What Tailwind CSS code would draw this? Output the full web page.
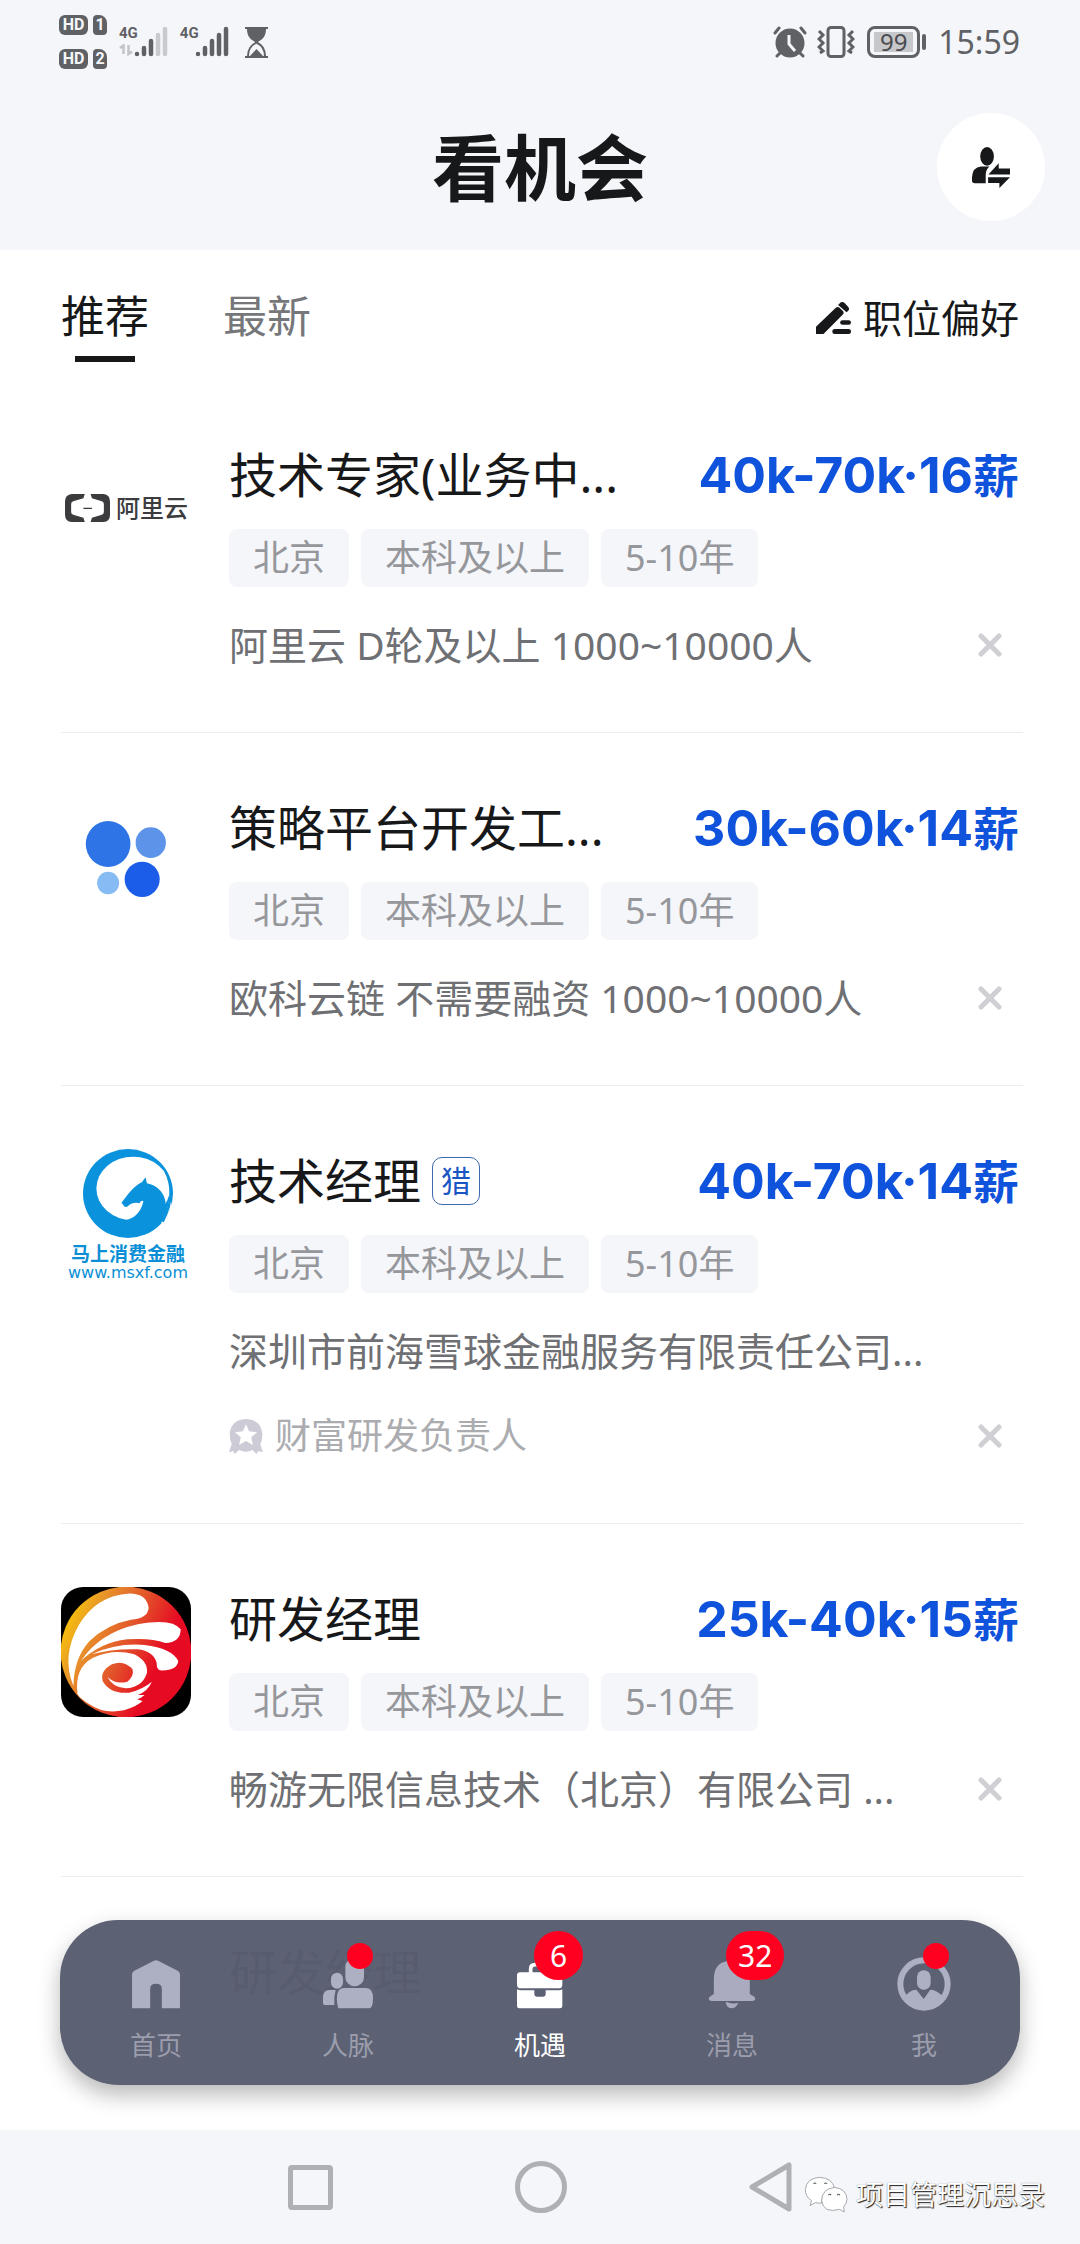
<!DOCTYPE html>
<html lang="zh-CN">
<head>
    <meta charset="UTF-8">
    <meta name="viewport" content="width=device-width, initial-scale=1.0">
    <title>看机会</title>
    <script src="https://cdn.jsdelivr.net/npm/@tailwindcss/browser@4"></script>
</head>
<body class="flex h-screen flex-col overflow-hidden bg-white font-['Noto_Sans','Noto_Sans_CJK_SC',sans-serif] text-[#17181a]">

    <header class="bg-[#f5f6fa]">
        <!-- status bar -->
        <div class="flex h-[84px] items-center justify-between pl-[59px] pr-[60px] text-[#5f6165]">
            <div class="flex items-center">
                <div class="flex flex-col gap-[14px] font-[Roboto,sans-serif] text-base font-bold leading-5 text-[#f5f6fa]">
                    <div class="flex gap-[5px]">
                        <span class="w-[29px] rounded-md bg-[#5f6165] text-center">HD</span>
                        <span class="w-[14px] rounded-sm rounded-tr-lg bg-[#5f6165] text-center">1</span>
                    </div>
                    <div class="flex gap-[5px]">
                        <span class="w-[29px] rounded-md bg-[#5f6165] text-center">HD</span>
                        <span class="w-[14px] rounded-sm rounded-tr-lg bg-[#5f6165] text-center">2</span>
                    </div>
                </div>
                <div class="ml-3 flex h-8 items-start font-[Roboto,sans-serif] text-[15px] font-bold leading-[14px]">
                    <div class="flex flex-col items-start">
                        <span>4G</span>
                        <svg class="mt-1 h-3 w-[14px]" viewBox="0 0 14 12" fill="none" stroke="#c3c4c8" stroke-width="2.5"><path d="M1 4 4.500 1.500V10M9.500 1V10L13 7.500"/></svg>
                    </div>
                    <svg class="-ml-1 h-8 w-[34px]" viewBox="0 0 34 32" stroke-width="4.500" stroke-linecap="round"><g stroke="#5f6165"><path d="M3 28v0M10 22v6M17 15v13"/></g><g stroke="#c9cacd"><path d="M24 9v19M31 3v25"/></g></svg>
                </div>
                <div class="ml-3 flex h-8 items-start font-[Roboto,sans-serif] text-[15px] font-bold leading-[14px]">
                    <span>4G</span>
                    <svg class="-ml-1 h-8 w-[34px]" viewBox="0 0 34 32" stroke="#5f6165" stroke-width="4.500" stroke-linecap="round"><path d="M3 28v0M10 22v6M17 15v13M24 9v19M31 3v25"/></svg>
                </div>
                <svg class="ml-4 h-[31px] w-[23px]" viewBox="0 0 23 31" fill="#5f6165"><path d="M0 0h23v2h-2c0 7-3 10-8 13h-3C5 12 2 9 2 2H0ZM0 29h23v2H0Z"/><path d="M3 29c0-7 3-11 8.500-13.500C17 18 20 22 20 29" fill="none" stroke="#5f6165" stroke-width="2"/><path d="M5 29l6.500-7 6.500 7Z"/></svg>
            </div>
            <div class="flex items-center">
                <svg class="h-8 w-[34px]" viewBox="0 0 34 32" fill="#5f6165"><circle cx="17" cy="17" r="14.500"/><path d="M16 9v9l6 7" fill="none" stroke="#f5f6fa" stroke-width="3"/><path d="M2 7l4-5M32 7l-4-5M4 30l5-5M30 30l-5-5" fill="none" stroke="#5f6165" stroke-width="3" stroke-linecap="round"/></svg>
                <svg class="ml-2.5 h-8 w-[38px]" viewBox="0 0 38 32" fill="none" stroke="#5f6165" stroke-width="3"><rect x="11" y="1.500" width="16" height="29" rx="3"/><path d="M2 5l4 4-4 4 4 4-4 4 4 4-3 2M36 5l-4 4 4 4-4 4 4 4-4 4 3 2"/></svg>
                <div class="ml-3 flex h-8 w-[53px] items-center justify-center rounded-lg border-[3px] border-[#5f6165] p-1">
                    <span class="w-full bg-[#c6c7ca] text-center text-2xl leading-5 text-[#4a4b4f]">99</span>
                </div>
                <span class="ml-0.5 h-4 w-1 rounded-sm bg-[#5f6165]"></span>
                <span class="ml-3 text-[32px] leading-10">15:59</span>
            </div>
        </div>
        <!-- page title -->
        <div class="grid h-[166px] grid-cols-3 items-center px-[35px]">
            <h1 class="col-start-2 text-center text-[72px] font-bold leading-[90px]">看机会</h1>
            <button aria-label="切换身份" class="flex size-[108px] items-center justify-center justify-self-end rounded-full bg-white">
                <svg class="h-[41px] w-[38px]" viewBox="1254 440 111 122" preserveAspectRatio="none" fill="#17181a"><ellipse cx="1298" cy="468" rx="20" ry="28"/><path d="M1254 540v-10q2-30 26-32h25q-11 10-11 24v26h-32q-8 0-8-8ZM1302 522l30-34v16h33v18ZM1301 530h64l-31 32v-15h-33Z"/></svg>
            </button>
        </div>
    </header>

    <main class="relative min-h-0 flex-1 overflow-hidden pl-[61px] pr-[57px]">
        <div class="flex h-[130px] items-start justify-between pr-1 pt-[34px]">
            <div class="flex gap-[74px] text-[44px] leading-[64px]">
                <button class="flex flex-col items-center">推荐<span class="mt-2 h-1.5 w-[60px] bg-[#17181a]"></span></button>
                <button class="self-start text-[#76777a]">最新</button>
            </div>
            <button class="flex items-center gap-3 pt-1 text-[39px] leading-[60px]">
                <svg class="h-8 w-[35px]" viewBox="803 125 103 97" preserveAspectRatio="none" fill="#17181a"><path d="M803 222v-22l59-58q6-4 11 1l10 10q3 5-1 10l-57 59ZM868 134l8-8q6-3 12 3l10 11q5 7-1 12l-4 4Z"/><rect x="874" y="180" width="32" height="14" rx="7"/><rect x="851" y="207" width="55" height="15" rx="7"/></svg>
                职位偏好
            </button>
        </div>

        <article class="flex h-[353px] gap-[38px] border-b border-[#ededf0] pt-[63px]">
            <div class="flex size-[130px] shrink-0 items-center gap-1.5 pl-1 text-[#3c3c3e]">
                <svg class="h-7 w-[45px] shrink-0" viewBox="189 700 132 84" preserveAspectRatio="none" fill="#3c3c3e"><path d="M247 700h-38q-20 2-20 22v40q0 20 20 22h38l-4-13-30-9q-6-2-6-8v-24q0-6 6-8l30-9ZM264 700h38q19 2 19 22v40q0 20-19 22h-38l4-13 29-9q6-2 6-8v-24q0-6-6-8l-29-9ZM243 741h25v4h-25Z"/></svg>
                <span class="whitespace-nowrap text-2xl font-medium leading-8">阿里云</span>
            </div>
            <div class="min-w-0 flex-1">
                <div class="flex h-16 items-center justify-between pr-1 text-5xl leading-[64px]">
                    <h2 class="whitespace-nowrap">技术专家(业务中...</h2>
                    <p class="whitespace-nowrap font-[Inter,'Noto_Sans_CJK_SC',sans-serif] text-[50px] font-bold text-[#0f52dc]">40k-70k·16<span class="text-[46px]">薪</span></p>
                </div>
                <ul class="mt-[22px] flex gap-3 text-[36px] leading-[58px] text-[#96979b]">
                    <li class="rounded-lg bg-[#f5f6fa] px-6">北京</li>
                    <li class="rounded-lg bg-[#f5f6fa] px-6">本科及以上</li>
                    <li class="rounded-lg bg-[#f5f6fa] px-6">5-10年</li>
                </ul>
                <div class="mt-[30px] flex items-center justify-between pr-[21px] text-[39px] leading-[56px] text-[#6f7073]">
                    <p class="whitespace-nowrap">阿里云 D轮及以上 1000~10000人</p>
                    <button aria-label="不感兴趣"><svg class="size-6" viewBox="0 0 24 24" stroke="#cfcfd4" stroke-width="5" stroke-linecap="round"><path d="M3 3l18 18M21 3 3 21"/></svg></button>
                </div>
            </div>
        </article>

        <article class="flex h-[353px] gap-[38px] border-b border-[#ededf0] pt-[63px]">
            <svg class="size-[130px] shrink-0" viewBox="177 108 378 390" preserveAspectRatio="none"><ellipse cx="314" cy="252" rx="65" ry="69" fill="#2f74e6"/><ellipse cx="438" cy="248" rx="44" ry="46" fill="#5e93ea"/><ellipse cx="314" cy="369" rx="32" ry="34" fill="#87bbf3"/><ellipse cx="413" cy="358" rx="51" ry="53" fill="#1b5de9"/></svg>
            <div class="min-w-0 flex-1">
                <div class="flex h-16 items-center justify-between pr-1 text-5xl leading-[64px]">
                    <h2 class="whitespace-nowrap">策略平台开发工...</h2>
                    <p class="whitespace-nowrap font-[Inter,'Noto_Sans_CJK_SC',sans-serif] text-[50px] font-bold text-[#0f52dc]">30k-60k·14<span class="text-[46px]">薪</span></p>
                </div>
                <ul class="mt-[22px] flex gap-3 text-[36px] leading-[58px] text-[#96979b]">
                    <li class="rounded-lg bg-[#f5f6fa] px-6">北京</li>
                    <li class="rounded-lg bg-[#f5f6fa] px-6">本科及以上</li>
                    <li class="rounded-lg bg-[#f5f6fa] px-6">5-10年</li>
                </ul>
                <div class="mt-[30px] flex items-center justify-between pr-[21px] text-[39px] leading-[56px] text-[#6f7073]">
                    <p class="whitespace-nowrap">欧科云链 不需要融资 1000~10000人</p>
                    <button aria-label="不感兴趣"><svg class="size-6" viewBox="0 0 24 24" stroke="#cfcfd4" stroke-width="5" stroke-linecap="round"><path d="M3 3l18 18M21 3 3 21"/></svg></button>
                </div>
            </div>
        </article>

        <article class="flex h-[438px] gap-[38px] border-b border-[#ededf0] pt-[63px]">
            <div class="flex h-[130px] w-[130px] shrink-0 flex-col items-center pl-1 text-[#0a8fd6]">
                <svg class="h-[89px] w-[90px] shrink-0" viewBox="240 83 262 268" preserveAspectRatio="none"><ellipse cx="371" cy="217" rx="131" ry="134" fill="#0a92dc"/><ellipse cx="386" cy="202" rx="107" ry="96" fill="#fff"/><path d="M488 180q14 60-20 124l8 8 22-60Z" fill="#fff"/><path d="M480 150q34 70-8 152" fill="none" stroke="#0a92dc" stroke-width="7"/><path d="M352 245l20-27q20-26 40-36l10-14 4 18q44 10 54 54 4 36-14 64-28 38-97 38l-71-38 30-8q72 12 88-56-6-4-12 6-22-4-34 10l-8 2Z" fill="#0a92dc"/></svg>
                <span class="mt-1 whitespace-nowrap text-[19px] font-bold leading-6">马上消费金融</span>
                <span class="whitespace-nowrap font-['DejaVu_Sans',sans-serif] text-base leading-[14px]">www.msxf.com</span>
            </div>
            <div class="min-w-0 flex-1">
                <div class="flex h-16 items-center justify-between pr-1 text-5xl leading-[64px]">
                    <h2 class="flex items-center gap-[11px] whitespace-nowrap">技术经理<span class="flex size-12 items-center justify-center rounded-[10px] border border-[#3c68ad] text-[30px] text-[#1a55c4]">猎</span></h2>
                    <p class="whitespace-nowrap font-[Inter,'Noto_Sans_CJK_SC',sans-serif] text-[50px] font-bold text-[#0f52dc]">40k-70k·14<span class="text-[46px]">薪</span></p>
                </div>
                <ul class="mt-[22px] flex gap-3 text-[36px] leading-[58px] text-[#96979b]">
                    <li class="rounded-lg bg-[#f5f6fa] px-6">北京</li>
                    <li class="rounded-lg bg-[#f5f6fa] px-6">本科及以上</li>
                    <li class="rounded-lg bg-[#f5f6fa] px-6">5-10年</li>
                </ul>
                <p class="mt-[30px] whitespace-nowrap text-[39px] leading-[56px] text-[#6f7073]">深圳市前海雪球金融服务有限责任公司...</p>
                <div class="mt-[29px] flex items-center justify-between pr-[21px] text-[36px] leading-[56px] text-[#abacaf]">
                    <p class="flex items-center gap-3 whitespace-nowrap">
                        <svg class="h-[35px] w-[34px]" viewBox="665 888 98 105" preserveAspectRatio="none" fill="#cccbd6"><path d="M714 888q44 2 47 46 0 20-6 30l8 24-13-4-6 9-11-12q-20 10-39 0l-12 12-5-9-12 4 8-26q-6-10-6-28 3-44 47-46Z"/><path d="M714 904l9 21 23 3-17 15 5 23-20-12-20 12 5-23-17-15 23-3Z" fill="#fff"/></svg>
                        财富研发负责人
                    </p>
                    <button aria-label="不感兴趣"><svg class="size-6" viewBox="0 0 24 24" stroke="#cfcfd4" stroke-width="5" stroke-linecap="round"><path d="M3 3l18 18M21 3 3 21"/></svg></button>
                </div>
            </div>
        </article>

        <article class="flex h-[353px] gap-[38px] border-b border-[#ededf0] pt-[63px]">
            <svg class="size-[130px] shrink-0 rounded-[22px] bg-black" viewBox="177 78 378 390" preserveAspectRatio="none">
                <defs><linearGradient id="sun" x1="0" y1="0.2" x2="0.9" y2="0.6"><stop offset="0" stop-color="#fbd000"/><stop offset="0.25" stop-color="#e8962a"/><stop offset="0.55" stop-color="#e2552a"/><stop offset="0.85" stop-color="#e60a22"/></linearGradient></defs>
                <ellipse cx="366" cy="273" rx="190" ry="196" fill="url(#sun)"/>
                <g fill="#fff">
                    <path d="M213 375q-36-90 17-185 50-85 140-92 55-3 62 42-2 32-52 36-70 14-120 64-45 50-47 135Z"/>
                    <path d="M235 300q55-85 165-110 100-20 125 15 0 40-45 41-40-16-110-11-80 10-135 65Z"/>
                    <path d="M265 280q75-35 155-28 80 10 98 48-3 30-53 28-10-3-10-23-10-35-55-40-70-3-135 15Z"/>
                    <path d="M225 400q-10-80 45-110 60-28 120-10 40 20 37 55-12 43-62 47-40-4-53-35 23 25 58 15 20-17 15-37-25-30-60-15-35 20-27 50 22 40 77 35 40-10 66-33-11 28-41 40h20q-10 10-22 13l16 5q-14 15-54 28-60 12-100-18-25-15-35-30Z"/>
                </g>
            </svg>
            <div class="min-w-0 flex-1">
                <div class="flex h-16 items-center justify-between pr-1 text-5xl leading-[64px]">
                    <h2 class="whitespace-nowrap">研发经理</h2>
                    <p class="whitespace-nowrap font-[Inter,'Noto_Sans_CJK_SC',sans-serif] text-[50px] font-bold text-[#0f52dc]">25k-40k·15<span class="text-[46px]">薪</span></p>
                </div>
                <ul class="mt-[22px] flex gap-3 text-[36px] leading-[58px] text-[#96979b]">
                    <li class="rounded-lg bg-[#f5f6fa] px-6">北京</li>
                    <li class="rounded-lg bg-[#f5f6fa] px-6">本科及以上</li>
                    <li class="rounded-lg bg-[#f5f6fa] px-6">5-10年</li>
                </ul>
                <div class="mt-[30px] flex items-center justify-between pr-[21px] text-[39px] leading-[56px] text-[#6f7073]">
                    <p class="whitespace-nowrap">畅游无限信息技术（北京）有限公司 ...</p>
                    <button aria-label="不感兴趣"><svg class="size-6" viewBox="0 0 24 24" stroke="#cfcfd4" stroke-width="5" stroke-linecap="round"><path d="M3 3l18 18M21 3 3 21"/></svg></button>
                </div>
            </div>
        </article>

        <!-- next row, mostly under the tab bar -->
        <article class="flex gap-[38px] pt-[63px]">
            <div class="size-[130px] shrink-0"></div>
            <div class="flex h-16 min-w-0 flex-1 items-center justify-between pr-1 text-5xl leading-[64px]">
                <h2 class="whitespace-nowrap">研发经理</h2>
            </div>
        </article>

        <nav class="absolute inset-x-[60px] bottom-[45px] grid h-[165px] grid-cols-5 rounded-[58px] bg-[#595e70]/98 text-[26px] leading-9 text-[#9b9dad] shadow-[0_10px_22px_rgba(0,0,0,0.28)]">
            <a href="#" class="flex flex-col items-center pt-[39px]">
                <svg class="size-[50px]" viewBox="380 238 146 149" preserveAspectRatio="none" fill="#adb0c2"><path d="M383 385V284q0-7 7-11l57-30q6-3 12 0l57 30q7 4 7 11v101h-53v-58q0-15-17-15t-17 15v58Z"/></svg>
                <span class="mt-[18px]">首页</span>
            </a>
            <a href="#" class="flex flex-col items-center pt-[39px]">
                <span class="relative">
                    <svg class="size-[50px]" viewBox="789 102 150 150" fill="#adb0c2"><rect x="856" y="98" width="56" height="86" rx="28"/><rect x="813" y="143" width="36" height="48" rx="18"/><path d="M835 250q-8-26-2-46 4-15 20-15h66q20 1 20 30 0 31-12 31ZM789 235v-20q2-20 18-20h20q-6 20-4 45h-28q-6 0-6-5Z"/></svg>
                    <i class="absolute -top-4 left-6 size-[26px] rounded-full bg-[#ff0020]"></i>
                </span>
                <span class="mt-[18px]">人脉</span>
            </a>
            <a href="#" class="flex flex-col items-center pt-[39px] text-white">
                <span class="relative">
                    <svg class="size-[50px]" viewBox="105 130 150 150" fill="#fff"><path d="M152 172v-12q0-13 13-13h30q13 0 13 13v12" fill="none" stroke="#fff" stroke-width="11"/><path d="M120 170h118q9 0 9 9v28q0 11-11 11H123q-12 0-12-11v-28q0-9 9-9ZM111 221q6 3 12 3h40v12q0 7 7 7h20q7 0 7-7v-12h40q6 0 10-3v50q0 7-7 7H118q-7 0-7-7Z"/></svg>
                    <b class="absolute -top-7 left-[19px] h-[49px] min-w-[49px] rounded-full bg-[#ff0020] px-3 text-center text-[30px] font-normal leading-[49px] text-white">6</b>
                </span>
                <span class="mt-[18px]">机遇</span>
            </a>
            <a href="#" class="flex flex-col items-center pt-[39px]">
                <span class="relative">
                    <svg class="size-[50px]" viewBox="485 240 146 150" preserveAspectRatio="none" fill="#aaabbf"><path d="M505 345v-45q0-55 52-55 53 0 53 55v45l14 9q6 12-9 12H500q-14 0-8-12ZM540 368q15 8 36 4-6 16-20 16-16-2-16-20Z"/></svg>
                    <b class="absolute -top-7 left-[19px] h-[49px] min-w-[49px] rounded-full bg-[#ff0020] px-3 text-center text-[30px] font-normal leading-[49px] text-white">32</b>
                </span>
                <span class="mt-[18px]">消息</span>
            </a>
            <a href="#" class="flex flex-col items-center pt-[39px]">
                <span class="relative">
                    <svg class="size-[50px] overflow-visible" viewBox="418 130 150 150" fill="#adb0c2"><circle cx="493" cy="205" r="71" fill="none" stroke="#adb0c2" stroke-width="18"/><rect x="472" y="164" width="41" height="58" rx="20"/><path d="M432 248q16-26 38-26l22 28 20-28q22 0 42 26-24 30-61 30-38 0-61-30Z"/></svg>
                    <i class="absolute -top-4 left-6 size-[26px] rounded-full bg-[#ff0020]"></i>
                </span>
                <span class="mt-[18px]">我</span>
            </a>
        </nav>
    </main>

    <!-- system keys -->
    <footer class="relative flex h-[114px] items-center justify-center gap-[182px] bg-[#f5f6fa]">
        <button aria-label="最近任务" class="size-[45px] rounded-sm border-[5px] border-[#afb0b4]"></button>
        <button aria-label="主屏幕" class="size-[52px] rounded-full border-[5px] border-[#afb0b4]"></button>
        <button aria-label="返回"><svg class="h-[50px] w-[43px]" viewBox="0 0 43 50" fill="none" stroke="#afb0b4" stroke-width="5" stroke-linejoin="round"><path d="M40 3v44L3 25Z"/></svg></button>
        <div class="absolute bottom-[31px] right-[35px] flex items-center gap-2">
            <svg class="h-[37px] w-[44px]" viewBox="768 888 130 110" preserveAspectRatio="none" fill="#fff" stroke="#97989c" stroke-width="2.500"><path d="M814 892q38 2 44 32-36 6-38 38 0 4 2 6-10 2-20-1l-16 9 4-15q-19-13-18-33 4-34 42-36Z"/><path d="M858 922q36 4 37 35-1 14-10 23l2 15-14-8q-48 14-53-27 2-34 38-38Z"/><path d="M796 911q4-5 8 0M828 911q4-5 8 0M840 945q4-5 8 0M866 945q4-5 8 0" fill="none" stroke="#55565a" stroke-width="3"/></svg>
            <span class="whitespace-nowrap text-[27px] leading-9 text-white [text-shadow:1px_1px_1px_#222,0_0_1px_#666]">项目管理沉思录</span>
        </div>
    </footer>

</body>
</html>
